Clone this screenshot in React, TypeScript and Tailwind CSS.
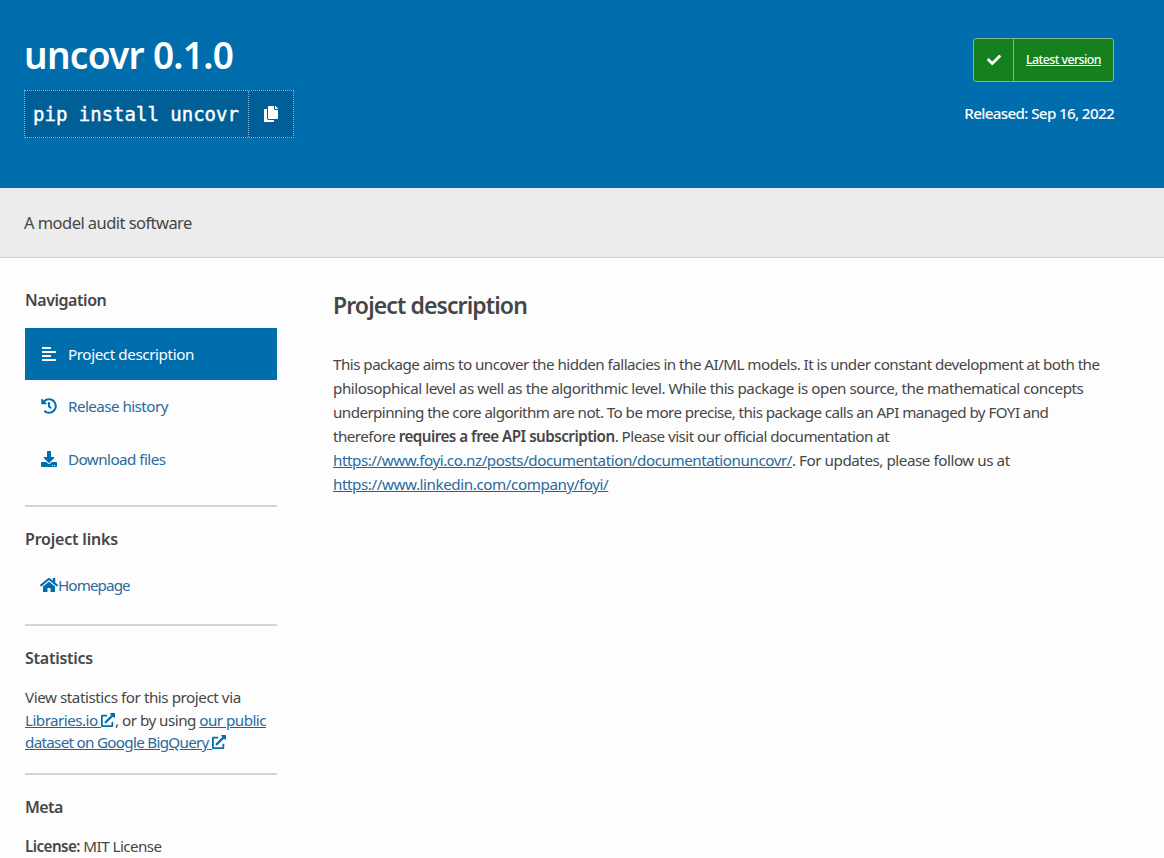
import React from "react";
import { FaCheck, FaCopy, FaAlignLeft, FaHistory, FaDownload, FaHome, FaExternalLinkAlt } from "react-icons/fa";

const sans = "[font-family:'Noto_Sans',sans-serif]";
const link = "text-[#2a6a9c] underline decoration-[#006dad]";

function Ext() {
  return <FaExternalLinkAlt className="inline-block text-[14px] align-[-1px] text-[#006dad]" />;
}

function Side({ children, tracking }: { children: React.ReactNode; tracking: string }) {
  return <h3 className={`text-[16px] leading-[24px] font-semibold text-[#464646] ${tracking}`}>{children}</h3>;
}

function NavRow({ icon, label, active, h, tracking }: { icon: React.ReactNode; label: string; active?: boolean; h: string; tracking?: string }) {
  return (
    <div className={`flex items-center gap-[11px] pl-[16px] ${h} ${active ? "bg-[#006dad] text-white" : "text-[#2a6a9c]"}`}>
      <span className={`w-[16px] flex justify-center text-[16px] ${active ? "text-white" : "text-[#006dad]"}`}>{icon}</span>
      <span className={tracking}>{label}</span>
    </div>
  );
}

export default function App() {
  return (
    <div className={`h-[858px] w-[1164px] overflow-hidden bg-white text-[#464646] text-[15.2px] leading-[24px] tracking-[-0.55px] ${sans}`}>
      <header className="h-[188px] bg-[#006dad] flex justify-between px-[24px] pt-[30px] text-white">
        <div>
          <h1 className="text-[37px] leading-[50px] font-semibold tracking-[-0.7px]">uncovr 0.1.0</h1>
          <div className="mt-[10px] flex h-[48px] w-[270px] border border-dotted border-[#7fb5d6] bg-[#005f96]">
            <div className="flex-1 flex items-center pl-[8px] [font-family:'DejaVu_Sans_Mono',monospace] text-[19px] tracking-[0px] [-webkit-text-stroke:0.4px_white]">pip install uncovr</div>
            <div className="w-[45px] border-l border-dotted border-[#7fb5d6] flex items-center justify-center"><FaCopy className="text-[16px]" /></div>
          </div>
        </div>
        <div className="flex flex-col items-end pr-[26px] w-[170px]">
          <div className="mt-[8px] flex h-[44px] w-[141px] rounded-[3px] border border-[#7fb58a] bg-[#16801f]">
            <div className="w-[40px] border-r border-[#7fb58a] flex items-center justify-center"><FaCheck className="text-[14px]" /></div>
            <div className="flex-1 flex items-center justify-center text-[12.3px] underline font-medium">Latest version</div>
          </div>
          <p className="mt-[19px] whitespace-nowrap text-[15.2px] font-medium tracking-[-0.65px]">Released: Sep 16, 2022</p>
        </div>
      </header>
      <div className="h-[70px] bg-[#ececec] border-b border-[#d3d3d3] flex items-center px-[24px] text-[16.5px]">A model audit software</div>
      <main className="flex px-[25px] bg-[#fdfdfd] h-[600px]">
        <aside className="w-[252px] shrink-0 pt-[30px]">
          <Side tracking="tracking-[-0.45px]">Navigation</Side>
          <div className="mt-[16px]">
            <NavRow active h="h-[52px]" icon={<FaAlignLeft />} label="Project description" tracking="tracking-[-0.4px]" />
            <NavRow h="h-[52px]" icon={<FaHistory />} label="Release history" />
            <NavRow h="h-[54px]" icon={<FaDownload />} label="Download files" />
          </div>
          <hr className="mt-[19px] border-0 h-[2px] bg-[#d3d3d3]" />
          <div className="mt-[20px]"><Side tracking="tracking-[-0.2px]">Project links</Side></div>
          <div className="mt-[22px] pl-[15px] flex items-center h-[24px] text-[#2a6a9c] tracking-[-0.9px]"><FaHome className="text-[#006dad] text-[18px]" />Homepage</div>
          <hr className="mt-[27px] border-0 h-[2px] bg-[#d3d3d3]" />
          <div className="mt-[20px]"><Side tracking="tracking-[-0.25px]">Statistics</Side></div>
          <p className="mt-[16px] leading-[22.5px] tracking-[-0.52px]">
            <span className="tracking-[-0.44px]">View statistics for this project via</span><br />
            <a className={link}>Libraries.io <Ext /></a>, or by using <a className={link}>our public<br /><span className="tracking-[-0.7px]">dataset on Google BigQuery</span> <Ext /></a>
          </p>
          <hr className="mt-[19px] border-0 h-[2px] bg-[#d3d3d3]" />
          <div className="mt-[20px]"><Side tracking="tracking-[-0.55px]">Meta</Side></div>
          <p className="mt-[15px]"><strong className="font-semibold">License:</strong> MIT License</p>
        </aside>
        <section className="ml-[56px] flex-1 pt-[32px]">
          <h2 className="text-[23px] leading-[30px] font-semibold tracking-[-0.9px]">Project description</h2>
          <div className="mt-[32px] w-[790px] text-[15.2px] leading-[24px] whitespace-nowrap">
            <span className="tracking-[-0.53px]">This package aims to uncover the hidden fallacies in the AI/ML models. It is under constant development at both the</span><br />
            <span className="tracking-[-0.45px]">philosophical level as well as the algorithmic level. While this package is open source, the mathematical concepts</span><br />
            <span className="tracking-[-0.57px]">underpinning the core algorithm are not. To be more precise, this package calls an API managed by FOYI and</span><br />
            <span className="tracking-[-0.52px]">therefore <strong className="font-semibold">requires a free API subscription</strong>. Please visit our official documentation at</span><br />
            <span className="tracking-[-0.45px]"><a className={link}>https://www.foyi.co.nz/posts/documentation/documentationuncovr/</a>. For updates, please follow us at</span><br />
            <a className={`${link} tracking-[-0.42px]`}>https://www.linkedin.com/company/foyi/</a>
          </div>
        </section>
      </main>
    </div>
  );
}
